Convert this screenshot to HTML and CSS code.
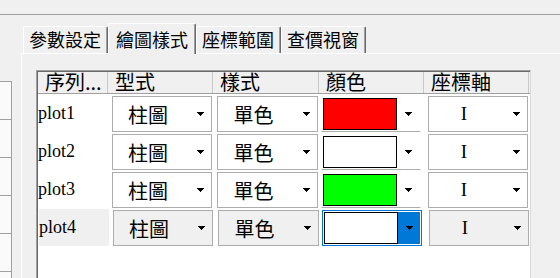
FILE: index.html
```html
<!DOCTYPE html>
<html lang="zh-Hant">
<head>
    <meta charset="UTF-8">
    <title>繪圖樣式</title>
    <link rel="stylesheet" href="styles.css">
</head>
<body>
    <div class="titlebar"></div>
    <div class="main">
        <div class="side">
            <div class="side-list">
                <div class="side-row"></div>
                <div class="side-row"></div>
                <div class="side-row"></div>
                <div class="side-row"></div>
                <div class="side-row"></div>
            </div>
        </div>

        <div class="tabctl">
            <div class="tabstrip">
                <div class="tab">參數設定</div>
                <div class="tab active">繪圖樣式</div>
                <div class="tab">座標範圍</div>
                <div class="tab">查價視窗</div>
            </div>

            <div class="tabpage">
                <div class="grid">
                    <div class="grid-head">
                        <div class="hcell c0">序列...</div>
                        <div class="hcell c1">型式</div>
                        <div class="hcell c2">樣式</div>
                        <div class="hcell c3">顏色</div>
                        <div class="hcell c4">座標軸</div>
                    </div>

                    <div class="grid-row">
                        <div class="cell-label c0">plot1</div>
                        <div class="cell c1"><div class="combo"><span class="combo-text">柱圖</span><span class="combo-btn"><svg width="7" height="4" viewBox="0 0 7 4"><path d="M0 0h7v1H0zM1 1h5v1H1zM2 2h3v1H2zM3 3h1v1H3z"/></svg></span></div></div>
                        <div class="cell c2"><div class="combo"><span class="combo-text">單色</span><span class="combo-btn"><svg width="7" height="4" viewBox="0 0 7 4"><path d="M0 0h7v1H0zM1 1h5v1H1zM2 2h3v1H2zM3 3h1v1H3z"/></svg></span></div></div>
                        <div class="cell c3"><div class="color-cell"><span class="swatch red"></span><span class="combo-btn"><svg width="7" height="4" viewBox="0 0 7 4"><path d="M0 0h7v1H0zM1 1h5v1H1zM2 2h3v1H2zM3 3h1v1H3z"/></svg></span></div></div>
                        <div class="cell c4"><div class="combo"><span class="combo-text axis">I</span><span class="combo-btn"><svg width="7" height="4" viewBox="0 0 7 4"><path d="M0 0h7v1H0zM1 1h5v1H1zM2 2h3v1H2zM3 3h1v1H3z"/></svg></span></div></div>
                    </div>

                    <div class="grid-row">
                        <div class="cell-label c0">plot2</div>
                        <div class="cell c1"><div class="combo"><span class="combo-text">柱圖</span><span class="combo-btn"><svg width="7" height="4" viewBox="0 0 7 4"><path d="M0 0h7v1H0zM1 1h5v1H1zM2 2h3v1H2zM3 3h1v1H3z"/></svg></span></div></div>
                        <div class="cell c2"><div class="combo"><span class="combo-text">單色</span><span class="combo-btn"><svg width="7" height="4" viewBox="0 0 7 4"><path d="M0 0h7v1H0zM1 1h5v1H1zM2 2h3v1H2zM3 3h1v1H3z"/></svg></span></div></div>
                        <div class="cell c3"><div class="color-cell"><span class="swatch white"></span><span class="combo-btn"><svg width="7" height="4" viewBox="0 0 7 4"><path d="M0 0h7v1H0zM1 1h5v1H1zM2 2h3v1H2zM3 3h1v1H3z"/></svg></span></div></div>
                        <div class="cell c4"><div class="combo"><span class="combo-text axis">I</span><span class="combo-btn"><svg width="7" height="4" viewBox="0 0 7 4"><path d="M0 0h7v1H0zM1 1h5v1H1zM2 2h3v1H2zM3 3h1v1H3z"/></svg></span></div></div>
                    </div>

                    <div class="grid-row">
                        <div class="cell-label c0">plot3</div>
                        <div class="cell c1"><div class="combo"><span class="combo-text">柱圖</span><span class="combo-btn"><svg width="7" height="4" viewBox="0 0 7 4"><path d="M0 0h7v1H0zM1 1h5v1H1zM2 2h3v1H2zM3 3h1v1H3z"/></svg></span></div></div>
                        <div class="cell c2"><div class="combo"><span class="combo-text">單色</span><span class="combo-btn"><svg width="7" height="4" viewBox="0 0 7 4"><path d="M0 0h7v1H0zM1 1h5v1H1zM2 2h3v1H2zM3 3h1v1H3z"/></svg></span></div></div>
                        <div class="cell c3"><div class="color-cell"><span class="swatch green"></span><span class="combo-btn"><svg width="7" height="4" viewBox="0 0 7 4"><path d="M0 0h7v1H0zM1 1h5v1H1zM2 2h3v1H2zM3 3h1v1H3z"/></svg></span></div></div>
                        <div class="cell c4"><div class="combo"><span class="combo-text axis">I</span><span class="combo-btn"><svg width="7" height="4" viewBox="0 0 7 4"><path d="M0 0h7v1H0zM1 1h5v1H1zM2 2h3v1H2zM3 3h1v1H3z"/></svg></span></div></div>
                    </div>

                    <div class="grid-row current">
                        <div class="cell-label c0">plot4</div>
                        <div class="cell c1"><div class="combo"><span class="combo-text">柱圖</span><span class="combo-btn"><svg width="7" height="4" viewBox="0 0 7 4"><path d="M0 0h7v1H0zM1 1h5v1H1zM2 2h3v1H2zM3 3h1v1H3z"/></svg></span></div></div>
                        <div class="cell c2"><div class="combo"><span class="combo-text">單色</span><span class="combo-btn"><svg width="7" height="4" viewBox="0 0 7 4"><path d="M0 0h7v1H0zM1 1h5v1H1zM2 2h3v1H2zM3 3h1v1H3z"/></svg></span></div></div>
                        <div class="cell c3"><div class="color-cell focus"><span class="swatch white"></span><span class="combo-btn"><svg width="7" height="4" viewBox="0 0 7 4"><path d="M0 0h7v1H0zM1 1h5v1H1zM2 2h3v1H2zM3 3h1v1H3z"/></svg></span></div></div>
                        <div class="cell c4"><div class="combo"><span class="combo-text axis">I</span><span class="combo-btn"><svg width="7" height="4" viewBox="0 0 7 4"><path d="M0 0h7v1H0zM1 1h5v1H1zM2 2h3v1H2zM3 3h1v1H3z"/></svg></span></div></div>
                    </div>
                </div>
            </div>
        </div>
    </div>
</body>
</html>
```

FILE: styles.css
```css
* {
    box-sizing: border-box;
}

body {
    margin: 0;
    width: 560px;
    height: 278px;
    overflow: hidden;
    background: #f0f0f0;
    font-family: "Noto Sans CJK TC", sans-serif;
    color: #000;
}

.titlebar {
    height: 15px;
    border-bottom: 1px solid #a0a0a0;
}

.main {
    display: flex;
    height: 263px;
    overflow: hidden;
}

/* left panel, mostly cut off */
.side {
    width: 21px;
    flex: none;
    padding-top: 66px;
}

.side-list {
    width: 12px;
    height: 100%;
    background: #fafafa;
    border-right: 1px solid #a0a0a0;
    border-top: 1px solid #a0a0a0;
}

.side-row {
    height: 38px;
    border-bottom: 1px solid #a0a0a0;
}

/* tabs */
.tabctl {
    flex: 1;
    min-width: 0;
    display: flex;
    flex-direction: column;
}

.tabstrip {
    flex: none;
    display: flex;
    align-items: flex-end;
    height: 38px;
    padding-left: 2px;
}

.tab {
    height: 27px;
    padding: 2px 6px 0 5px;
    border: 1px solid #fff;
    border-right-color: #696969;
    border-bottom: none;
    border-radius: 2px 2px 0 0;
    box-shadow: inset -1px 0 0 #a0a0a0;
    font-size: 18px;
    line-height: 20px;
    white-space: nowrap;
}

.tab.active {
    position: relative;
    z-index: 1;
    height: 31px;
    margin-bottom: -1px;
    padding: 5px 7px 0 7px;
    background: #f0f0f0;
}

.tabpage {
    flex: 1;
    min-height: 0;
    border-top: 1px solid #fff;
    border-left: 1px solid #fff;
    padding: 16px 0 0 14px;
}

/* data grid */
.grid {
    width: 495px;
    height: 260px;
    padding: 1px 0 0 1px;
    background: #fff;
    border: 1px solid;
    border-color: #a0a0a0 #dadada #dadada #a0a0a0;
    box-shadow: inset 1px 1px 0 #696969;
}

.grid-head {
    display: flex;
    height: 22px;
    background: #f0f0f0;
    border-bottom: 1px solid #a0a0a0;
}

.hcell {
    height: 21px;
    padding-left: 7px;
    border-right: 1px solid #c8c8c8;
    font-size: 20px;
    line-height: 20px;
    white-space: nowrap;
}

.c0 { width: 70px; }
.c1 { width: 105px; }
.c2 { width: 106px; }
.c3 { width: 105px; }
.c4 { width: 105px; }

.grid-row {
    display: flex;
    height: 38px;
}

.cell-label {
    font-family: "Liberation Serif", serif;
    font-size: 18px;
    line-height: 38px;
    white-space: nowrap;
}

.current .cell-label {
    margin: 1px 0 0 1px;
    line-height: 37px;
    background: #f0f0f0;
}

.combo {
    display: flex;
    align-items: center;
    height: 36px;
    margin: 2px 1px 0 4px;
    border: 1px solid #adadad;
    background: #fff;
}

.current .combo {
    background: #f0f0f0;
}

.combo-text {
    flex: 1;
    padding-right: 6px;
    text-align: center;
    font-size: 20px;
}

.combo-text.axis {
    font-family: "Liberation Serif", serif;
    font-size: 19px;
}

.combo-btn {
    width: 22px;
    align-self: stretch;
    display: flex;
    align-items: center;
    justify-content: center;
}

.combo-btn svg {
    display: block;
    fill: #000;
}

.color-cell {
    display: flex;
    height: 36px;
    margin: 2px 3px 0 2px;
    padding: 1px;
    border: 1px solid transparent;
    border-bottom-color: #adadad;
}

.color-cell .combo-btn {
    flex: 1;
}

.swatch {
    width: 74px;
    border: 1px solid #000;
}

.red { background: #ff0000; }
.green { background: #00ff00; }
.white { background: #fff; }

.color-cell.focus {
    border-color: #0078d7;
}

.color-cell.focus .combo-btn {
    background: #0078d7;
}
```
